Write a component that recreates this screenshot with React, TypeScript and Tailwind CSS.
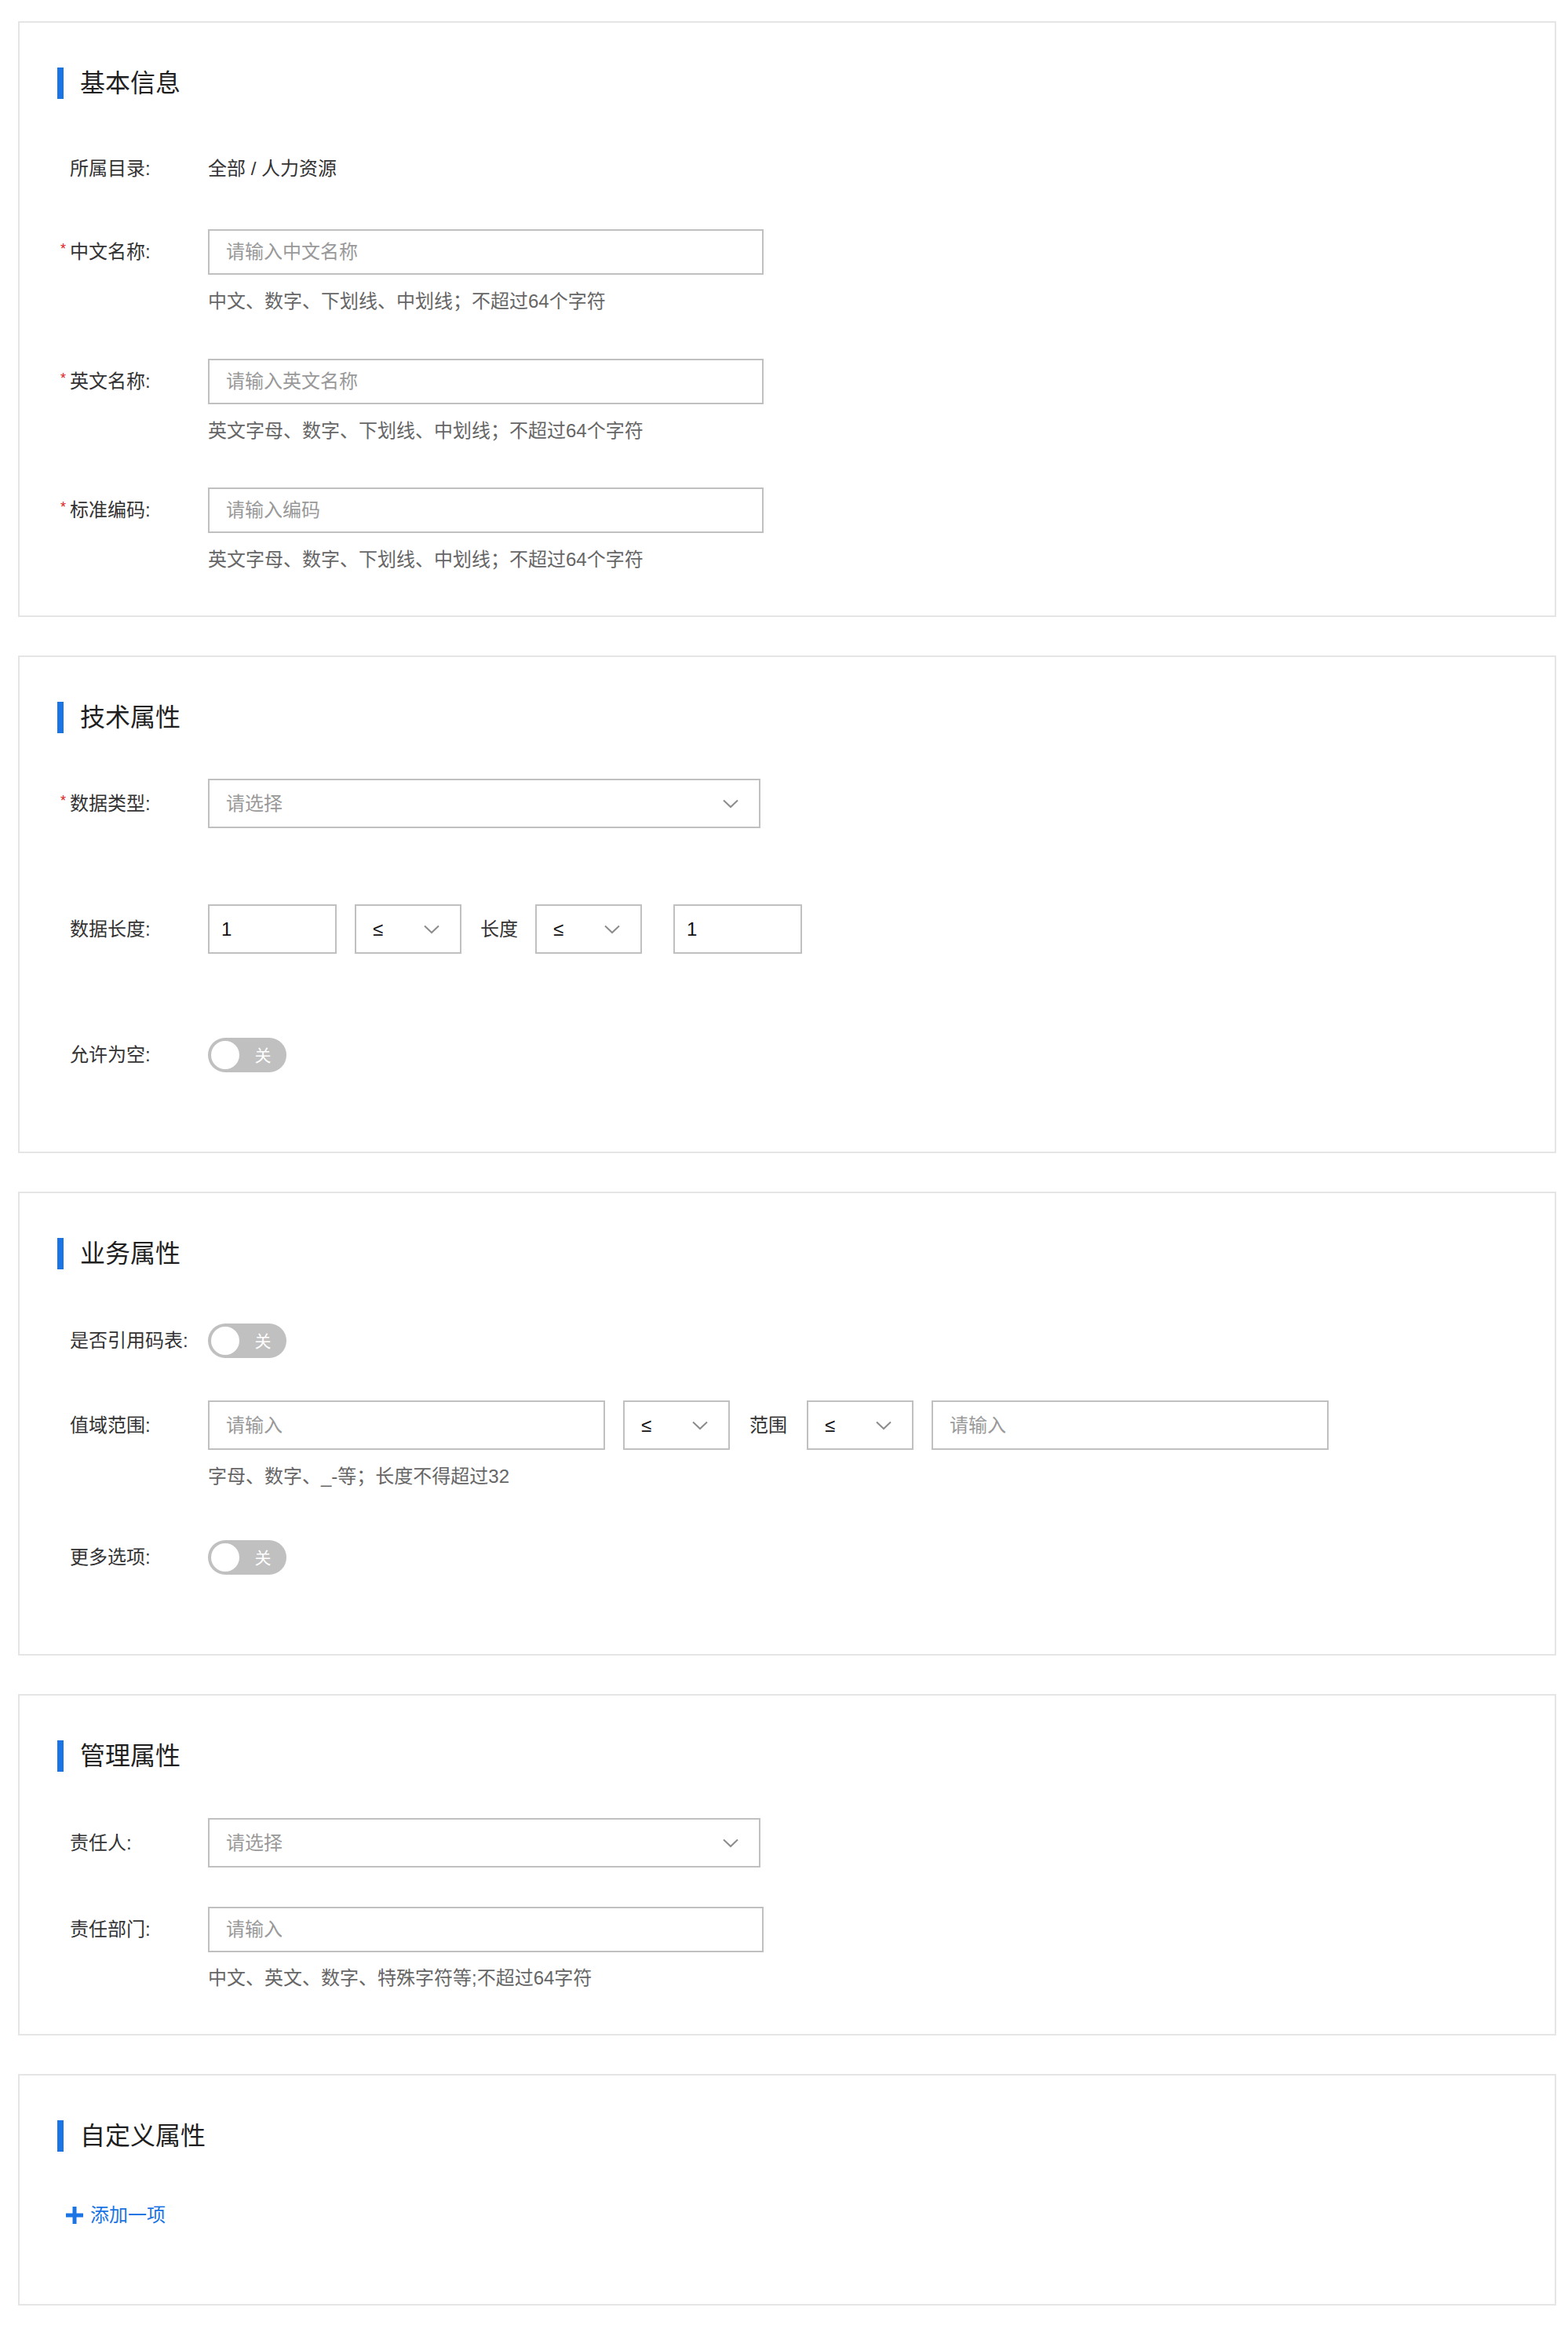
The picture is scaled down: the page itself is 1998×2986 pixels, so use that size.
import React from 'react';

function Chevron() {
  return (
    <svg width="20" height="12" viewBox="0 0 20 12" className="shrink-0">
      <path d="M1 1.5 L10 10 L19 1.5" fill="none" stroke="#8c8c8c" strokeWidth="2" />
    </svg>
  );
}

function SectionTitle({ text }: { text: string }) {
  return (
    <div className="flex items-center h-[40px] pl-[48px]">
      <div className="w-[8px] h-[40px] bg-[#1b74e4]" />
      <span className="ml-[21px] text-[32px] leading-[40px] text-[#1f1f1f]">{text}</span>
    </div>
  );
}

function Label({ text, required }: { text: string; required?: boolean }) {
  return (
    <div className="flex items-center w-[240px] shrink-0 pl-[52px] text-[24px] text-[#333] whitespace-nowrap">
      <span className="w-[12px] text-[18px] leading-none text-[#e0211b] mb-[8px]">{required ? '*' : ''}</span>
      <span>{text}</span>
    </div>
  );
}

function Input({ placeholder, value, w, h }: { placeholder?: string; value?: string; w: string; h: string }) {
  return (
    <div className={`${w} ${h} flex items-center border-2 border-[#c0c0c0] bg-white text-[24px] ${value ? 'pl-[15px]' : 'pl-[21px]'}`}>
      {value ? <span className="text-[#111]">{value}</span> : <span className="text-[#999]">{placeholder}</span>}
    </div>
  );
}

function Select({ text, w, dark }: { text: string; w: string; dark?: boolean }) {
  return (
    <div className={`${w} h-[63px] flex items-center justify-between border-2 border-[#c0c0c0] bg-white pl-[21px] pr-[26px] text-[24px]`}>
      <span className={dark ? 'text-[#111]' : 'text-[#999]'}>{text}</span>
      <Chevron />
    </div>
  );
}

function Toggle() {
  return (
    <div className="w-[100px] h-[44px] rounded-full bg-[#c0c0c0] flex items-center pl-[4px]">
      <div className="w-[36px] h-[36px] rounded-full bg-white" />
      <span className="flex-1 text-center text-[21px] leading-none text-white">关</span>
    </div>
  );
}

function Help({ text, mt }: { text: string; mt: string }) {
  return <div className={`${mt} pl-[240px] text-[24px] leading-[32px] text-[#666]`}>{text}</div>;
}

function Card({ children, pb }: { children: React.ReactNode; pb: string }) {
  return (
    <div className={`ml-[23px] w-[1960px] border-2 border-[#e5e5e5] bg-white pt-[57px] ${pb}`}>{children}</div>
  );
}

export default function App() {
  return (
    <div className="w-[1998px] min-h-[2986px] bg-white pt-[27px] pb-[49px] flex flex-col gap-[49px] font-['Liberation_Sans','Noto_Sans_CJK_SC',sans-serif]">
      <Card pb="pb-[55px]">
        <SectionTitle text="基本信息" />
        <div className="mt-[69px] flex items-center h-[40px]">
          <Label text="所属目录:" />
          <span className="text-[24px] text-[#333]">全部 / 人力资源</span>
        </div>
        <div className="mt-[57px] flex items-center">
          <Label text="中文名称:" required />
          <Input placeholder="请输入中文名称" w="w-[708px]" h="h-[58px]" />
        </div>
        <Help mt="mt-[18px]" text="中文、数字、下划线、中划线；不超过64个字符" />
        <div className="mt-[57px] flex items-center">
          <Label text="英文名称:" required />
          <Input placeholder="请输入英文名称" w="w-[708px]" h="h-[58px]" />
        </div>
        <Help mt="mt-[18px]" text="英文字母、数字、下划线、中划线；不超过64个字符" />
        <div className="mt-[56px] flex items-center">
          <Label text="标准编码:" required />
          <Input placeholder="请输入编码" w="w-[708px]" h="h-[58px]" />
        </div>
        <Help mt="mt-[18px]" text="英文字母、数字、下划线、中划线；不超过64个字符" />
      </Card>

      <Card pb="pb-[101px]">
        <SectionTitle text="技术属性" />
        <div className="mt-[58px] flex items-center">
          <Label text="数据类型:" required />
          <Select text="请选择" w="w-[704px]" />
        </div>
        <div className="mt-[97px] flex items-center">
          <Label text="数据长度:" />
          <Input value="1" w="w-[164px]" h="h-[63px]" />
          <div className="ml-[23px]">
            <Select text="≤" w="w-[136px]" dark />
          </div>
          <span className="ml-[24px] text-[24px] text-[#333]">长度</span>
          <div className="ml-[22px]">
            <Select text="≤" w="w-[136px]" dark />
          </div>
          <div className="ml-[40px]">
            <Input value="1" w="w-[164px]" h="h-[63px]" />
          </div>
        </div>
        <div className="mt-[107px] flex items-center">
          <Label text="允许为空:" />
          <Toggle />
        </div>
      </Card>

      <Card pb="pb-[101px]">
        <SectionTitle text="业务属性" />
        <div className="mt-[69px] flex items-center">
          <Label text="是否引用码表:" />
          <Toggle />
        </div>
        <div className="mt-[54px] flex items-center">
          <Label text="值域范围:" />
          <Input placeholder="请输入" w="w-[506px]" h="h-[63px]" />
          <div className="ml-[23px]">
            <Select text="≤" w="w-[136px]" dark />
          </div>
          <span className="ml-[25px] text-[24px] text-[#333]">范围</span>
          <div className="ml-[25px]">
            <Select text="≤" w="w-[136px]" dark />
          </div>
          <div className="ml-[23px]">
            <Input placeholder="请输入" w="w-[506px]" h="h-[63px]" />
          </div>
        </div>
        <Help mt="mt-[18px]" text="字母、数字、_-等；长度不得超过32" />
        <div className="mt-[65px] flex items-center">
          <Label text="更多选项:" />
          <Toggle />
        </div>
      </Card>

      <Card pb="pb-[55px]">
        <SectionTitle text="管理属性" />
        <div className="mt-[59px] flex items-center">
          <Label text="责任人:" />
          <Select text="请选择" w="w-[704px]" />
        </div>
        <div className="mt-[50px] flex items-center">
          <Label text="责任部门:" />
          <Input placeholder="请输入" w="w-[708px]" h="h-[58px]" />
        </div>
        <Help mt="mt-[17px]" text="中文、英文、数字、特殊字符等;不超过64字符" />
      </Card>

      <Card pb="pb-[97px]">
        <SectionTitle text="自定义属性" />
        <div className="mt-[65px] pl-[58px] flex items-center h-[32px] text-[#1b74e4]">
          <svg width="24" height="24" viewBox="0 0 24 24" className="shrink-0">
            <path d="M12 1 V23 M1 12 H23" stroke="#1b74e4" strokeWidth="5" />
          </svg>
          <span className="ml-[8px] text-[24px] leading-[32px]">添加一项</span>
        </div>
      </Card>
    </div>
  );
}
